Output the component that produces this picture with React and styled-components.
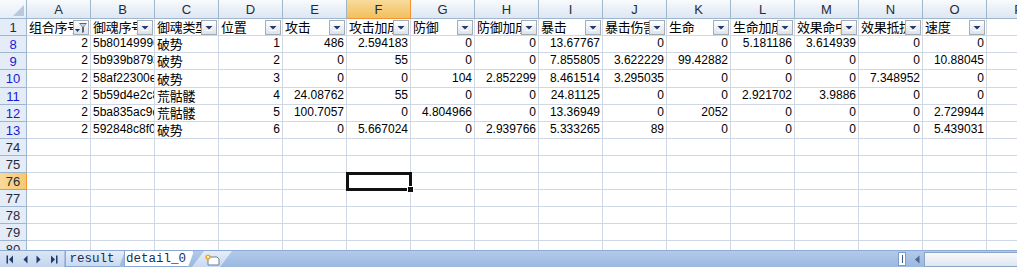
import React from "react";
import styled, { createGlobalStyle, css } from "styled-components";

const GlobalStyle = createGlobalStyle`
  body {
    margin: 0;
    overflow: hidden;
    background: #fff;
  }
`;

const GRID = "#d0d7e5";
const HEAD_BORDER = "#9eb6ce";
const CELL_FONT = `"Liberation Sans", Arial, "Noto Sans CJK SC", sans-serif`;

const Sheet = styled.div`
  width: 1017px;
  height: 267px;
  display: flex;
  flex-direction: column;
  overflow: hidden;
  font-family: ${CELL_FONT};
`;

const GridArea = styled.div`
  flex: 1;
  overflow: hidden;
`;

const Row = styled.div`
  display: grid;
  grid-template-columns: 27px repeat(16, 64px);
  height: ${(p) => p.$h}px;
  width: 1051px;
`;

const Corner = styled.div`
  position: relative;
  background: linear-gradient(#f9fbfd, #e4ecf7);
  border-right: 1px solid ${HEAD_BORDER};
  border-bottom: 1px solid ${HEAD_BORDER};
  &::after {
    content: "";
    position: absolute;
    right: 2px;
    bottom: 2px;
    border-left: 11px solid transparent;
    border-bottom: 11px solid #b9c9dd;
  }
`;

const ColHead = styled.div`
  display: flex;
  align-items: center;
  justify-content: center;
  font-size: 13px;
  color: #1e2b3c;
  box-sizing: border-box;
  border-right: 1px solid ${(p) => (p.$active ? "#f29436" : HEAD_BORDER)};
  border-bottom: 1px solid ${(p) => (p.$active ? "#f29436" : HEAD_BORDER)};
  background: ${(p) =>
    p.$active
      ? "linear-gradient(#f9dc9c, #f5cd7b 50%, #f1c15f)"
      : "linear-gradient(#f9fbfd, #eaf0f8 50%, #dde6f2)"};
`;

const RowHead = styled.div`
  display: flex;
  align-items: center;
  justify-content: center;
  font-size: 13px;
  box-sizing: border-box;
  color: ${(p) => (p.$filtered ? "#1a1ad6" : "#1e2b3c")};
  border-right: 1px solid ${(p) => (p.$active ? "#f29436" : HEAD_BORDER)};
  border-bottom: 1px solid ${(p) => (p.$active ? "#f29436" : HEAD_BORDER)};
  background: ${(p) =>
    p.$active ? "linear-gradient(90deg, #f9d99a, #f4c970)" : "#e4ecf7"};
`;

const Cell = styled.div`
  position: relative;
  box-sizing: border-box;
  display: flex;
  align-items: flex-end;
  justify-content: ${(p) => (p.$right ? "flex-end" : "flex-start")};
  padding: 0 2px 1px 2px;
  border-right: 1px solid ${GRID};
  border-bottom: 1px solid ${GRID};
  overflow: ${(p) => (p.$selected ? "visible" : "hidden")};
  white-space: nowrap;
  font-size: 12px;
  line-height: 15px;
  color: #000;
  ${(p) =>
    p.$selected &&
    css`
      z-index: 2;
      &::before {
        content: "";
        position: absolute;
        left: -1px;
        top: -1px;
        right: -2px;
        bottom: -2px;
        border: 3px solid #111;
      }
      &::after {
        content: "";
        position: absolute;
        right: -4px;
        bottom: -4px;
        width: 5px;
        height: 5px;
        background: #111;
        border: 1px solid #fff;
      }
    `}
`;

const CjkText = styled.span`
  font-family: "Noto Sans CJK SC", sans-serif;
  font-size: 13px;
  line-height: 15px;
  letter-spacing: -0.3px;
`;

const FilterBtn = styled.div`
  position: absolute;
  right: 1px;
  top: 1px;
  width: 16px;
  height: 15px;
  box-sizing: border-box;
  border: 1px solid #a3adb9;
  background: linear-gradient(#ffffff, #eef1f5 50%, #dce2ea);
  display: flex;
  align-items: center;
  justify-content: center;
`;

const TabBar = styled.div`
  height: 17px;
  display: flex;
  align-items: stretch;
  background: linear-gradient(#b2c9ea, #9bb8e0);
  border-top: 1px solid #8aa9d6;
  box-sizing: border-box;
`;

const NavBox = styled.div`
  width: 64px;
  display: flex;
  align-items: center;
  justify-content: space-around;
  padding: 0 3px;
  box-sizing: border-box;
  background: linear-gradient(#dbe6f5, #c3d5ee);
`;

const Tab = styled.div`
  display: flex;
  align-items: center;
  justify-content: center;
  width: ${(p) => p.$w}px;
  margin-left: ${(p) => p.$ml || 0}px;
  font-family: "Liberation Mono", "Courier New", monospace;
  font-size: 12.5px;
  color: #15305a;
  box-sizing: border-box;
  background: ${(p) =>
    p.$active ? "#ffffff" : "linear-gradient(#e6eef9, #c9d9f0)"};
  border: 1px solid #8ca8d4;
  border-top: none;
  clip-path: polygon(0 0, 100% 0, calc(100% - 6px) 100%, 0 100%);
  padding-right: 6px;
`;

const NewTab = styled.div`
  width: 40px;
  margin-left: -2px;
  display: flex;
  align-items: center;
  padding-left: 12px;
  box-sizing: border-box;
  background: linear-gradient(#e6eef9, #c9d9f0);
  clip-path: polygon(12px 0, 100% 0, calc(100% - 12px) 100%, 0 100%);
`;

const Spacer = styled.div`
  flex: 1;
`;

const SplitBox = styled.div`
  width: 6px;
  margin: 1px 4px 1px 0;
  background: #fff;
  border: 1px solid #7f9cc7;
  display: flex;
  justify-content: center;
  &::after {
    content: "";
    width: 1px;
    margin: 2px 0;
    background: #3b5b8c;
  }
`;

const ScrollArrow = styled.div`
  width: 14px;
  display: flex;
  align-items: center;
  justify-content: center;
`;

const ScrollTrack = styled.div`
  width: 92px;
  margin-top: 1px;
  background: linear-gradient(#f7f9fc, #dfe6ef);
  border: 1px solid #8ba3c5;
  border-right: none;
`;

const Arrow = ({ dir, bar }) => (
  <svg width="8" height="9" viewBox="0 0 8 9">
    {dir === "left" ? (
      <>
        {bar && <rect x="0.5" y="0.5" width="1.5" height="8" fill="#1f3c6b" />}
        <polygon points={bar ? "7,0.5 7,8.5 3,4.5" : "6.5,0.5 6.5,8.5 2.5,4.5"} fill="#1f3c6b" />
      </>
    ) : (
      <>
        <polygon points={bar ? "1,0.5 1,8.5 5,4.5" : "1.5,0.5 1.5,8.5 5.5,4.5"} fill="#1f3c6b" />
        {bar && <rect x="6" y="0.5" width="1.5" height="8" fill="#1f3c6b" />}
      </>
    )}
  </svg>
);

const DownArrow = () => (
  <svg width="8" height="6" viewBox="0 0 8 6">
    <polygon points="0.5,1 7.5,1 4,4.5" fill="#1f3c6b" />
    <line x1="0.5" y1="5.5" x2="7.5" y2="5.5" stroke="#ffffff" strokeWidth="1" />
  </svg>
);

const FunnelIcon = () => (
  <svg width="13" height="12" viewBox="0 0 13 12">
    <polygon points="4,1 12,1 9,5 9,10 7,11 7,5" fill="#5a6675" />
    <polygon points="5,2 11,2 8.5,4.8 7.5,4.8" fill="#c9d0d8" />
    <polygon points="0,7 5,7 2.5,10" fill="#1f3c6b" />
  </svg>
);

const SheetIcon = () => (
  <svg width="16" height="13" viewBox="0 0 16 13">
    <path d="M4 4 H13 L15 6 V12 H4 Z" fill="#ffffff" stroke="#6b7f99" strokeWidth="1" />
    <circle cx="4" cy="4" r="2.6" fill="#f0a020" />
    <circle cx="4" cy="4" r="1.2" fill="#fff4c0" />
  </svg>
);

const cols = ["A", "B", "C", "D", "E", "F", "G", "H", "I", "J", "K", "L", "M", "N", "O", "P"];

const headers = [
  "组合序号", "御魂序号", "御魂类型", "位置", "攻击", "攻击加成", "防御", "防御加成",
  "暴击", "暴击伤害", "生命", "生命加成", "效果命中", "效果抵抗", "速度",
];

const data = [
  { n: 8, v: [2, "5b80149996", "破势", 1, 486, 2.594183, 0, 0, 13.67767, 0, 0, 5.181186, 3.614939, 0, 0] },
  { n: 9, v: [2, "5b939b8793", "破势", 2, 0, 55, 0, 0, 7.855805, 3.622229, 99.42882, 0, 0, 0, 10.88045] },
  { n: 10, v: [2, "58af22300e", "破势", 3, 0, 0, 104, 2.852299, 8.461514, 3.295035, 0, 0, 0, 7.348952, 0] },
  { n: 11, v: [2, "5b59d4e2c8", "荒骷髅", 4, 24.08762, 55, 0, 0, 24.81125, 0, 0, 2.921702, 3.9886, 0, 0] },
  { n: 12, v: [2, "5ba835ac9d", "荒骷髅", 5, 100.7057, 0, 4.804966, 0, 13.36949, 0, 2052, 0, 0, 0, 2.729944] },
  { n: 13, v: [2, "592848c8f0", "破势", 6, 0, 5.667024, 0, 2.939766, 5.333265, 89, 0, 0, 0, 0, 5.439031] },
];

const emptyRows = [74, 75, 76, 77, 78, 79, 80];

export default function App() {
  return (
    <Sheet>
      <GlobalStyle />
      <GridArea>
        <Row $h={19}>
          <Corner />
          {cols.map((c) => (
            <ColHead key={c} $active={c === "F"}>
              {c}
            </ColHead>
          ))}
        </Row>

        <Row $h={17}>
          <RowHead>1</RowHead>
          {cols.map((c, i) => (
            <Cell key={c}>
              {headers[i] && (
                <>
                  <CjkText>{headers[i]}</CjkText>
                  <FilterBtn>{i === 0 ? <FunnelIcon /> : <DownArrow />}</FilterBtn>
                </>
              )}
            </Cell>
          ))}
        </Row>

        {data.map((r) => (
          <Row key={r.n} $h={r.n === 10 ? 18 : 17}>
            <RowHead $filtered>{r.n}</RowHead>
            {cols.map((c, i) => {
              const val = r.v[i];
              const isText = typeof val === "string";
              return (
                <Cell key={c} $right={val !== undefined && !isText}>
                  {isText && i === 2 ? <CjkText>{val}</CjkText> : val}
                </Cell>
              );
            })}
          </Row>
        ))}

        {emptyRows.map((n) => (
          <Row key={n} $h={17}>
            <RowHead $active={n === 76}>{n}</RowHead>
            {cols.map((c) => (
              <Cell key={c} $selected={n === 76 && c === "F"} />
            ))}
          </Row>
        ))}
      </GridArea>

      <TabBar>
        <NavBox>
          <Arrow dir="left" bar />
          <Arrow dir="left" />
          <Arrow dir="right" />
          <Arrow dir="right" bar />
        </NavBox>
        <Tab $w={60} $ml={1}>result</Tab>
        <Tab $w={70} $ml={-1} $active>detail_0</Tab>
        <NewTab>
          <SheetIcon />
        </NewTab>
        <Spacer />
        <SplitBox />
        <ScrollArrow>
          <svg width="6" height="9" viewBox="0 0 6 9">
            <polygon points="5.5,0.5 5.5,8.5 1,4.5" fill="#4d6689" />
          </svg>
        </ScrollArrow>
        <ScrollTrack />
      </TabBar>
    </Sheet>
  );
}
